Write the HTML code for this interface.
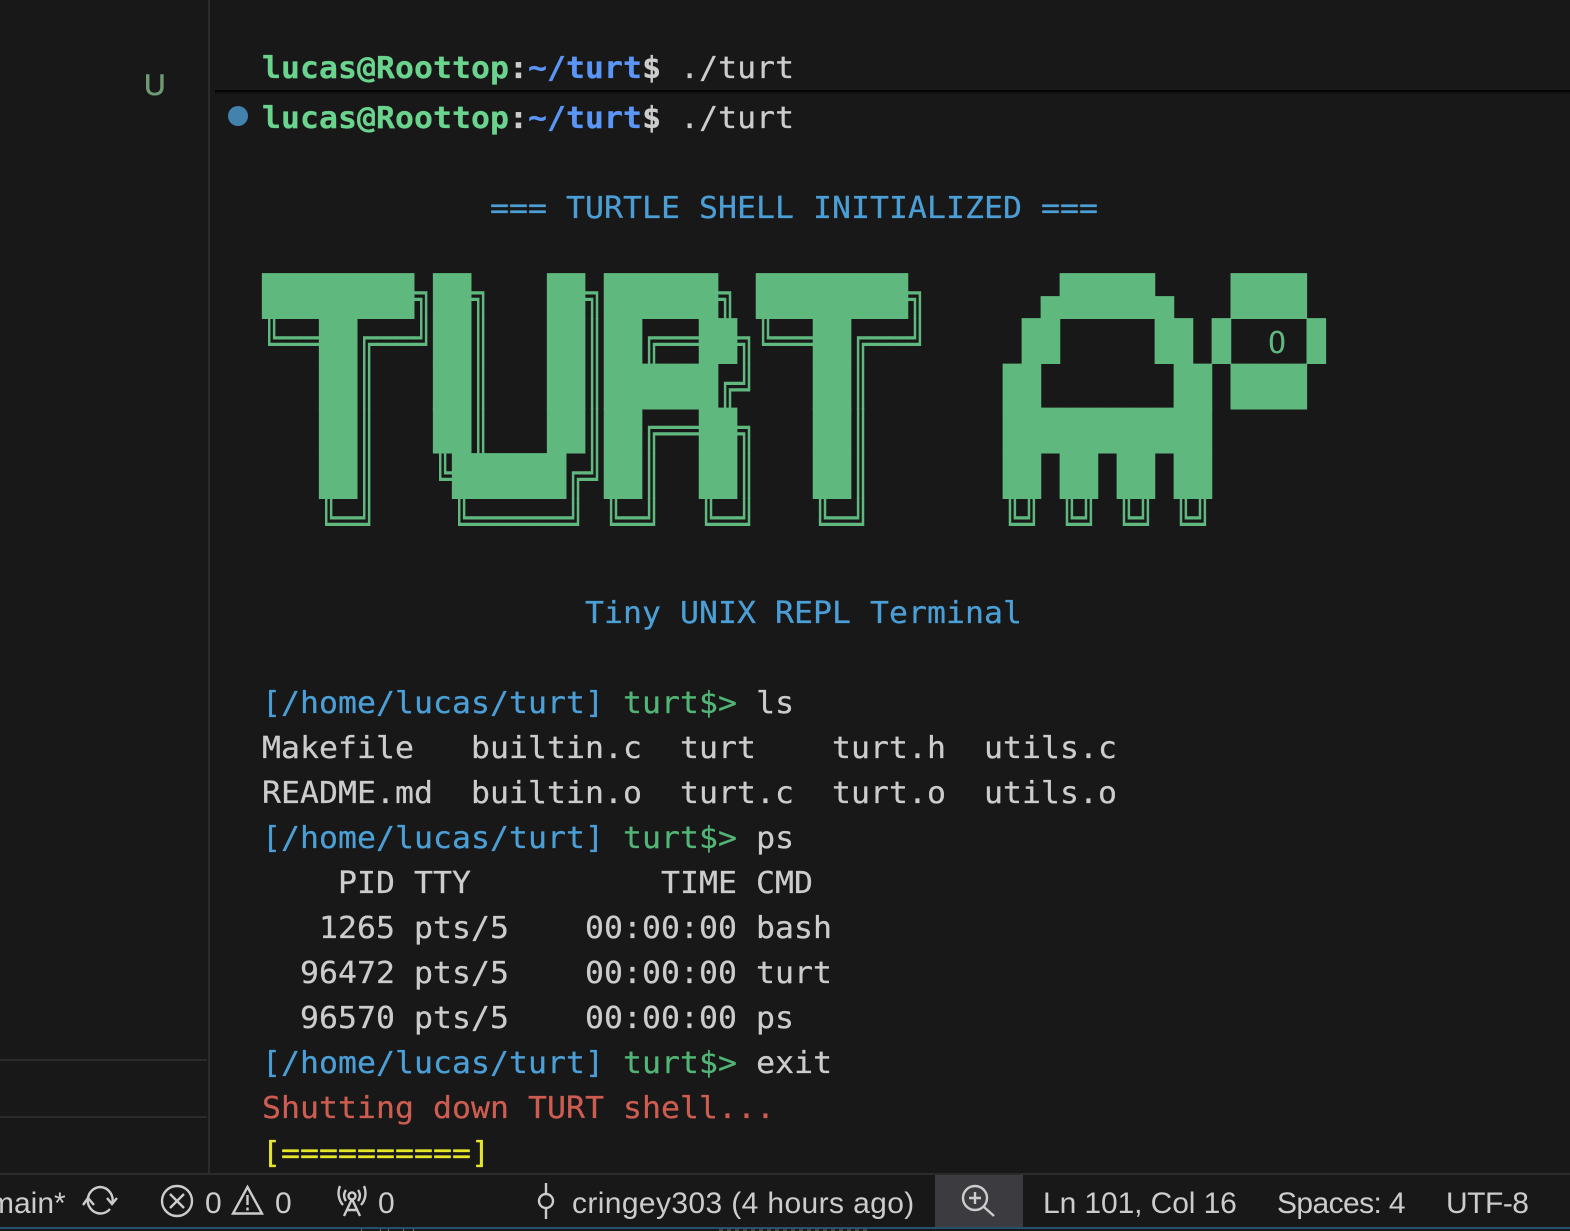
<!DOCTYPE html>
<html><head><meta charset="utf-8"><style>
html,body{margin:0;padding:0;background:#181818;width:1570px;height:1231px;overflow:hidden}
body{position:relative}
.a{position:absolute}
.r{position:absolute;left:262px;height:45px;line-height:45px;margin:0;white-space:pre;font-family:"DejaVu Sans Mono","Liberation Mono",monospace;font-size:30px;letter-spacing:.035px;color:#cccccc;transform:scaleX(1.05);transform-origin:0 0;-webkit-text-stroke:.25px currentColor}
.b{font-weight:bold}
.g{color:#6ad38e}.bl{color:#5b95f5}.c{color:#4b9fd6}.tg{color:#52b575}.w{color:#cccccc}.red{color:#cd5c51}.y{color:#e5e52a}
pre.art{position:absolute;left:262.300px;top:275px;margin:0;font-family:"DejaVu Sans Mono",monospace;font-size:31.56px;line-height:36.75px;color:#5fb97f;transform:scaleY(1.2245);transform-origin:0 0;white-space:pre}
.s{position:absolute;top:1184px;height:40px;line-height:40px;font-family:"Liberation Sans",sans-serif;font-size:30px;color:#cccccc;white-space:pre}
svg{position:absolute;left:0;top:0}
</style></head><body>
<div class="a" style="left:208px;top:0;width:2px;height:1173px;background:#2b2b2b"></div>
<div class="a" style="left:0;top:1059px;width:207px;height:2px;background:#2b2b2b"></div>
<div class="a" style="left:0;top:1116px;width:207px;height:2px;background:#2b2b2b"></div>
<div class="a" style="left:144px;top:66px;font:30px/40px 'Liberation Sans',sans-serif;color:#6f9a75;-webkit-text-stroke:.6px #6f9a75">U</div>
<div class="r b" style="top:46px"><span class="g">lucas@Roottop</span>:<span class="bl">~/turt</span>$ <span style="font-weight:normal">./turt</span></div>
<div class="a" style="left:215px;top:90px;width:1355px;height:2px;background:#050505"></div>
<div class="a" style="left:215px;top:92px;width:1355px;height:3px;background:linear-gradient(#101010,#181818)"></div>
<div class="a" style="left:228px;top:106px;width:20px;height:20px;border-radius:50%;background:#4382ad"></div>
<div class="r b" style="top:96px"><span class="g">lucas@Roottop</span>:<span class="bl">~/turt</span>$ <span style="font-weight:normal">./turt</span></div>
<div class="r c" style="top:186px">            === TURTLE SHELL INITIALIZED ===</div>
<pre class="art">████████╗██╗   ██╗██████╗ ████████╗      ▄█████▄   ████
╚══██╔══╝██║   ██║██╔══██╗╚══██╔══╝     ██     ██ █    █
   ██║   ██║   ██║██████╔╝   ██║       ██       ██ ████
   ██║   ██║   ██║██╔══██╗   ██║       ███████████
   ██║   ╚██████╔╝██║  ██║   ██║       ██ ██ ██ ██
   ╚═╝    ╚═════╝ ╚═╝  ╚═╝   ╚═╝       ╚╝ ╚╝ ╚╝ ╚╝</pre>
<div class="a" style="left:1268px;top:321px;height:45px;line-height:45px;font-family:'DejaVu Sans Mono',monospace;font-size:30px;color:#5fb97f">O</div>
<div class="r c" style="top:591px">                 Tiny UNIX REPL Terminal</div>
<div class="r" style="top:681px"><span class="c">[/home/lucas/turt]</span> <span class="tg">turt$&gt;</span> ls</div>
<div class="r" style="top:726px">Makefile   builtin.c  turt    turt.h  utils.c</div>
<div class="r" style="top:771px">README.md  builtin.o  turt.c  turt.o  utils.o</div>
<div class="r" style="top:816px"><span class="c">[/home/lucas/turt]</span> <span class="tg">turt$&gt;</span> ps</div>
<div class="r" style="top:861px">    PID TTY          TIME CMD</div>
<div class="r" style="top:906px">   1265 pts/5    00:00:00 bash</div>
<div class="r" style="top:951px">  96472 pts/5    00:00:00 turt</div>
<div class="r" style="top:996px">  96570 pts/5    00:00:00 ps</div>
<div class="r" style="top:1041px"><span class="c">[/home/lucas/turt]</span> <span class="tg">turt$&gt;</span> exit</div>
<div class="r red" style="top:1086px">Shutting down TURT shell...</div>
<div class="r y" style="top:1131px">[==========]</div>
<div class="a" style="left:0;top:1173px;width:1570px;height:2px;background:#2b2b2b"></div>
<div class="a" style="left:0;top:1175px;width:1570px;height:52px;background:#181818"></div>
<div class="a" style="left:935px;top:1175px;width:88px;height:52px;background:#3c3c40"></div>
<div class="a" style="left:0;top:1227px;width:1570px;height:2px;background:#27506c"></div>
<div class="s" style="left:-11px">main*</div>
<div class="s" style="left:205px">0</div>
<div class="s" style="left:275px">0</div>
<div class="s" style="left:378px">0</div>
<div class="s" style="left:572px;letter-spacing:.38px">cringey303 (4 hours ago)</div>
<div class="s" style="left:1043px;letter-spacing:-.1px">Ln 101, Col 16</div>
<div class="s" style="left:1277px;letter-spacing:-.6px">Spaces: 4</div>
<div class="s" style="left:1446px;letter-spacing:-.5px">UTF-8</div>
<svg width="1570" height="1231" fill="none" stroke="#cccccc" stroke-width="2.4">
<path d="M88 1198A13 13 0 0 1 100 1187A13 13 0 0 1 112 1204M110 1209A13 13 0 0 1 100 1213.500A13 13 0 0 1 88 1198"/>
<path d="M83 1205l5-7 6 7M107 1198l5 6 5-6"/>
<circle cx="177" cy="1201" r="15"/><path d="M170 1194l14 14M184 1194l-14 14"/>
<path d="M247.500 1187l14.500 26.500h-29z"/><path d="M247.500 1195v10M247.500 1207.500v3"/>
<circle cx="352" cy="1196" r="3.500"/><path d="M352 1199l-8 17M352 1199l8 17M346.500 1210h11"/>
<path d="M346 1190a9 9 0 0 0 0 11M358 1190a9 9 0 0 1 0 11M340 1186a18 18 0 0 0 3 19M364 1186a18 18 0 0 1-3 19"/>
<circle cx="546" cy="1201" r="7"/><path d="M546 1183v11M546 1208v11"/>
<circle cx="975" cy="1198" r="12"/><path d="M984 1207l10 9M969 1198h12M975 1192v12"/>
<path d="M361 1230h1M380 1230h1M388 1230h1M403 1230h1M413 1230h1" stroke="#777" stroke-width="2"/>
<path d="M719 1230H870" stroke="#4a4640" stroke-width="2" stroke-dasharray="4 4"/>
</svg>
</body></html>
